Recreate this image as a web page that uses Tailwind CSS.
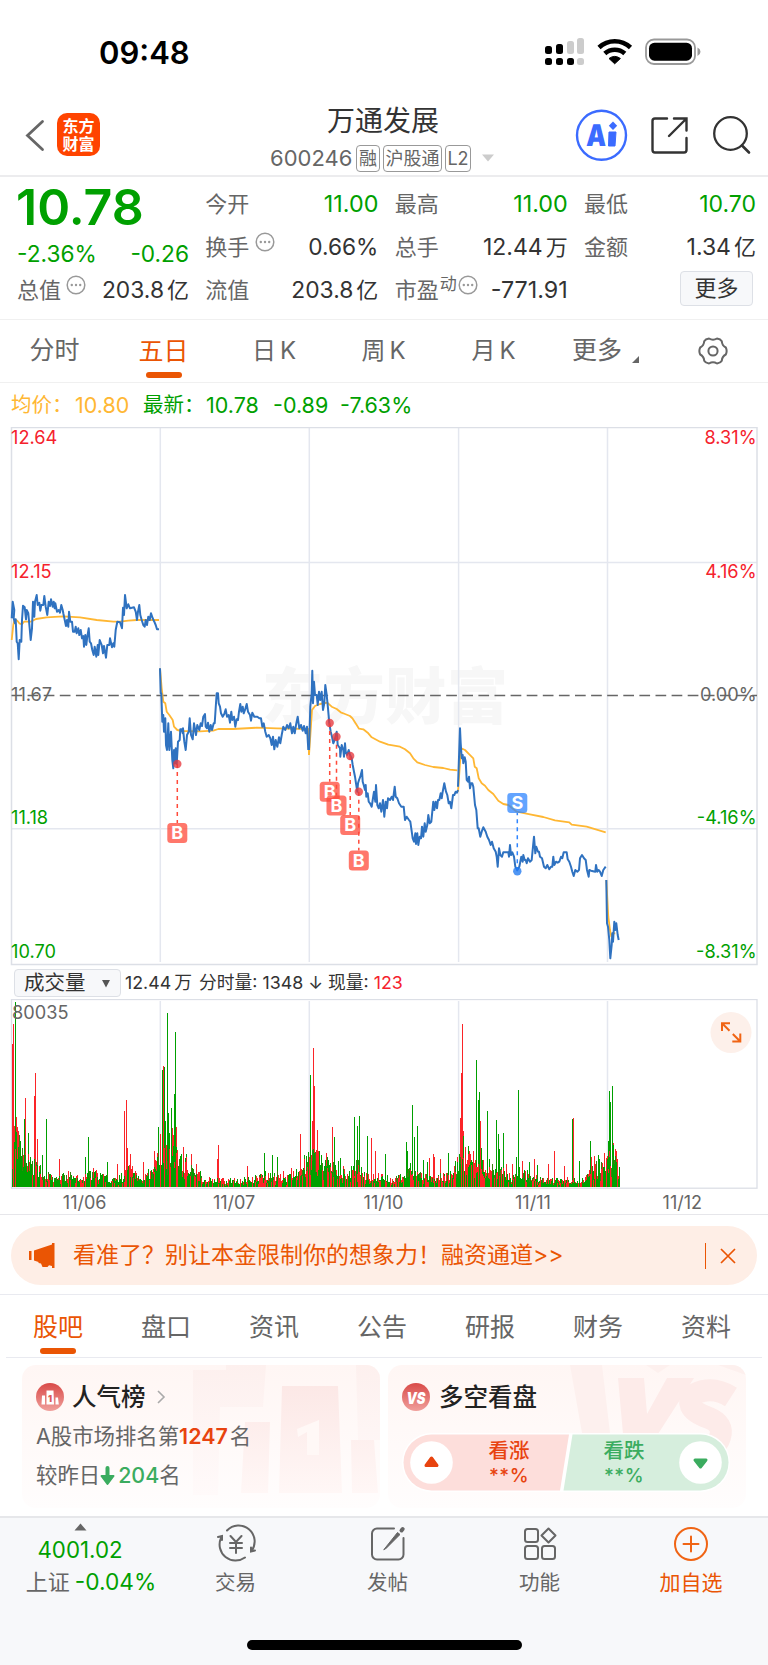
<!DOCTYPE html>
<html lang="zh-CN">
<head>
    <meta charset="UTF-8">
    <meta name="viewport" content="width=device-width, initial-scale=1.0">
    <title>万通发展 600246</title>
    <script src="https://cdn.jsdelivr.net/npm/@tailwindcss/browser@4"></script>
</head>
<body class="bg-white">
<div class="w-[768px] h-[1665px] flex flex-col overflow-hidden bg-white font-['Inter','Noto_Sans_CJK_SC',sans-serif] text-[#333] whitespace-nowrap">

    <!-- Status bar -->
    <div class="h-[104px] shrink-0 flex justify-between pl-[99px] pr-[67px]">
        <span class="mt-[33px] h-[40px] leading-[40px] text-[31px] font-semibold text-black">09:48</span>
        <svg class="mt-[36px]" width="157" height="32" viewBox="544 36 157 32">
            <g fill="#000">
                <rect x="545" y="46" width="7" height="8" rx="2.5"/>
                <rect x="556" y="44" width="7" height="10" rx="2.5"/>
                <rect x="545" y="58" width="7" height="7" rx="2.5"/>
                <rect x="556" y="58" width="7" height="7" rx="2.5"/>
                <rect x="567" y="58" width="7" height="7" rx="2.5"/>
            </g>
            <g fill="#ccc">
                <rect x="567" y="41" width="7" height="13" rx="2.5"/>
                <rect x="577" y="38" width="7" height="16" rx="2.5"/>
                <rect x="577" y="58" width="7" height="7" rx="2.5"/>
            </g>
            <g fill="none" stroke="#000" stroke-width="4.6">
                <path d="M599 47.5a23 23 0 0 1 31.500 0"/>
                <path d="M604.800 53.500a15 15 0 0 1 20 0"/>
            </g>
            <path d="M609 58.500q5.700-4.200 11.400 0l-5.700 5.300z" fill="#000" stroke="#000" stroke-width="1" stroke-linejoin="round"/>
            <rect x="646" y="39.500" width="49" height="24.500" rx="8" fill="none" stroke="#999" stroke-width="1.800"/>
            <rect x="649" y="42.700" width="43" height="18" rx="5.500" fill="#000"/>
            <path d="M697.500 47.500q3 1.500 3 4.200t-3 4.200z" fill="#999"/>
        </svg>
    </div>

    <!-- Title bar -->
    <div class="h-[71px] shrink-0 flex items-start relative border-b-2 border-[#ececee] box-content">
        <svg class="ml-[24px] mt-[14px]" width="22" height="36" viewBox="0 0 22 36" fill="none" stroke="#666" stroke-width="2.8" stroke-linecap="round"><path d="M18.500 3.500L3.500 17.500L18.500 31.500"/></svg>
        <div class="ml-[11px] mt-[9px] size-[43px] rounded-[10px] bg-[#ff4400] text-white font-bold text-[16px] leading-[18px] flex flex-col items-center justify-center"><span>东方</span><span>财富</span></div>
        <div class="absolute left-[199px] w-[368px] top-px flex flex-col items-center">
            <div class="h-[33px] leading-[33px] text-[28px]">万通发展</div>
        </div>
        <div class="absolute left-[270px] top-[39px] h-[30px] flex items-center text-[22px] text-[#666]">
            <span class="w-[86px]">600246</span>
            <span class="w-[24px] h-[27px] flex items-center justify-center border border-[#999] rounded-[4px] text-[18px]">融</span>
            <span class="ml-[3px] w-[59px] h-[27px] flex items-center justify-center border border-[#999] rounded-[4px] text-[18px]">沪股通</span>
            <span class="ml-[3px] w-[26px] h-[27px] flex items-center justify-center border border-[#999] rounded-[4px] text-[18px]">L2</span>
            <svg class="ml-[10px]" width="14" height="8"><path d="M1 0.500h12L7 7.500z" fill="#ccc"/></svg>
        </div>
        <svg class="ml-auto mr-[15px] mt-[4px]" width="180" height="56" viewBox="573 108 180 56" fill="none">
            <circle cx="601.500" cy="135.300" r="24.500" stroke="#3b6bff" stroke-width="2.400"/>
            <text x="586" y="146" font-family="Inter" font-weight="900" font-size="30" fill="#3b6bff" textLength="20" lengthAdjust="spacingAndGlyphs" transform="skewX(-2) translate(5 0)">A</text>
            <path d="M609 132h7l-1 14h-6.500z" fill="#3b6bff" stroke="#3b6bff" stroke-linejoin="round"/>
            <path d="M613 121.500l4.200 4.300l-4.200 4.300l-4.200-4.300z" fill="#3b6bff"/>
            <path d="M667 118.500h-12a2.500 2.500 0 0 0-2.500 2.500v29a2.500 2.500 0 0 0 2.500 2.500h29a2.500 2.500 0 0 0 2.500-2.500v-12M674 118.500h12.500v12M669 136L686 119" stroke="#333" stroke-width="2.400" stroke-linecap="round"/>
            <circle cx="730.500" cy="133.500" r="16.300" stroke="#333" stroke-width="2.300"/>
            <path d="M742 145.500l7 7" stroke="#333" stroke-width="2.600" stroke-linecap="round"/>
        </svg>
    </div>

    <!-- Quote -->
    <div class="h-[143px] shrink-0 border-b border-[#f0f0f0] pl-[17px] pr-[12px] flex justify-between text-[22px]">
        <div class="w-[172px] flex flex-col">
            <div class="h-[56px] leading-[61px] text-[50px] font-semibold text-[#00a000] -ml-[1px]">10.78</div>
            <div class="h-[36px] leading-[42px] flex justify-between text-[22.7px] text-[#00a000]"><span>-2.36%</span><span>-0.26</span></div>
            <div class="h-[43px] flex items-center justify-between"><span class="text-[#666] flex">总值<svg class="ml-[5px] mt-[1px]" width="20" height="20"><use href="#more"/></svg></span><span class="text-[22.8px]">203.8<span class="ml-[3px] text-[22px]">亿</span></span></div>
        </div>
        <div class="w-[173px] pt-[6px]">
            <div class="h-[43px] flex items-center justify-between"><span class="text-[#666]">今开</span><span class="text-[23.3px] text-[#00a000]">11.00</span></div>
            <div class="h-[43px] flex items-center justify-between"><span class="text-[#666] flex">换手<svg class="ml-[6px] mt-[1px]" width="20" height="20"><use href="#more"/></svg></span><span class="text-[22.7px]">0.66%</span></div>
            <div class="h-[43px] flex items-center justify-between"><span class="text-[#666]">流值</span><span class="text-[22.8px]">203.8<span class="ml-[3px] text-[22px]">亿</span></span></div>
        </div>
        <div class="w-[173px] pt-[6px]">
            <div class="h-[43px] flex items-center justify-between"><span class="text-[#666]">最高</span><span class="text-[23.3px] text-[#00a000]">11.00</span></div>
            <div class="h-[43px] flex items-center justify-between"><span class="text-[#666]">总手</span><span class="text-[23px]">12.44<span class="ml-[3px] text-[22px]">万</span></span></div>
            <div class="h-[43px] flex items-center justify-between"><span class="text-[#666] flex">市盈<span class="text-[17px] leading-[20px] ml-px">动</span><svg class="ml-px mt-[1px]" width="20" height="20"><use href="#more"/></svg></span><span class="text-[23.3px]">-771.91</span></div>
        </div>
        <div class="w-[172px] pt-[6px]">
            <div class="h-[43px] flex items-center justify-between"><span class="text-[#666]">最低</span><span class="text-[23px] text-[#00a000]">10.70</span></div>
            <div class="h-[43px] flex items-center justify-between"><span class="text-[#666]">金额</span><span class="text-[23px]">1.34<span class="ml-[3px] text-[22px]">亿</span></span></div>
            <div class="h-[43px] flex items-center justify-end pr-[3px]"><span class="mb-[4px] w-[73px] h-[35px] flex items-center justify-center rounded-[4px] border border-[#dde0e6] bg-[#f7f8fa]">更多</span></div>
        </div>
    </div>

    <!-- Period tabs -->
    <div class="h-[63px] shrink-0 border-b border-[#f0f0f0] flex items-center text-[25px] text-[#666]">
        <div class="w-[109px] text-center">分时</div>
        <div class="w-[109px] h-full flex flex-col items-center text-[#ea5504]"><span class="h-[52px] leading-[62px]">五日</span><i class="w-[36px] h-[6px] rounded-[3px] bg-[#ea5504]"></i></div>
        <div class="w-[112px] text-center text-[24px]">日<span class="ml-[4px]">K</span></div>
        <div class="w-[107px] text-center text-[24px]">周<span class="ml-[4px]">K</span></div>
        <div class="w-[113px] text-center text-[24px]">月<span class="ml-[4px]">K</span></div>
        <div class="pl-[22px] flex items-end">更多<svg class="ml-[9px] mb-[6px]" width="9" height="9"><path d="M8 1v7H1z" fill="#666"/></svg></div>
        <svg class="ml-[58px]" width="30" height="30" viewBox="-15 -15 30 30" fill="none" stroke="#666" stroke-width="2" stroke-linejoin="round">
            <path d="M-4 -12.500Q0 -10 4 -12.500Q7.500 -12 8.800 -9.700Q9 -5.500 12.800 -3.500Q14.500 0 12.800 3.500Q9 5.500 8.800 9.700Q7.500 12 4 12.500Q0 10 -4 12.500Q-7.500 12 -8.800 9.700Q-9 5.500 -12.800 3.500Q-14.500 0 -12.800 -3.500Q-9 -5.500 -8.800 -9.700Q-7.500 -12 -4 -12.500Z"/>
            <circle r="4.600"/>
        </svg>
    </div>

    <!-- Legend -->
    <div class="h-[44px] shrink-0 pl-[11px] flex items-center text-[21.5px] text-[#00a000]">
        <span class="w-[64px] text-[#ffb733] text-[20.500px]">均价：</span><span class="w-[68px] text-[#ffb733]">10.80</span>
        <span class="w-[63px] text-[20.500px]">最新：</span><span class="w-[67px]">10.78</span><span class="w-[67px]">-0.89</span><span>-7.63%</span>
    </div>

    <!-- Price chart -->
    <svg class="shrink-0 block" width="768" height="540" viewBox="0 427 768 540">
        <defs>
            <symbol id="more" viewBox="0 0 20 20"><circle cx="10" cy="10" r="8.800" fill="none" stroke="#999" stroke-width="1.500"/><g fill="#999"><circle cx="5.800" cy="10" r="1.200"/><circle cx="10" cy="10" r="1.200"/><circle cx="14.200" cy="10" r="1.200"/></g></symbol>
        </defs>
        <text x="262" y="719" font-size="61" font-weight="900" fill="#f7f7f7" textLength="246">东方财富</text>
        <g fill="none" stroke="#e4e7ef" stroke-width="1.500">
            <path d="M11 562.500H757M11 828.700H757M160.300 428V962M309.300 428V962M458.600 428V962M607.500 428V962"/>
            <rect x="11.500" y="427.500" width="745.500" height="537" stroke="#dcdfe6"/>
        </g>
        <path d="M11.500 695.500H757" stroke="#666" stroke-width="1.300" stroke-dasharray="10.700 5.400"/>
        <g id="avg" fill="none" stroke="#ffb733" stroke-width="1.800" stroke-linejoin="round"></g>
        <g id="price" fill="none" stroke="#2f72c0" stroke-width="2" stroke-linejoin="round"></g>
        <g font-size="18.200">
            <g fill="#f5222d"><text x="11" y="444">12.64</text><text x="11" y="578">12.15</text><text x="756.500" y="444" text-anchor="end">8.31%</text><text x="756.500" y="578" text-anchor="end">4.16%</text></g>
            <g fill="#666"><text x="11" y="701">11.67</text><text x="756.500" y="701" text-anchor="end">0.00%</text></g>
            <g fill="#00a000"><text x="11" y="823.500">11.18</text><text x="11" y="957.500">10.70</text><text x="756.500" y="823.500" text-anchor="end">-4.16%</text><text x="756.500" y="957.500" text-anchor="end">-8.31%</text></g>
        </g>
        <g id="marks"></g>
    </svg>

    <!-- Volume header -->
    <div class="h-[32px] shrink-0 pl-[14px] flex items-center text-[17.800px]">
        <div class="w-[107px] h-[28px] flex items-center justify-between pl-[9px] pr-[9px] rounded-[4px] border border-[#dde0e6] bg-[#f7f8fa] text-[20.500px]">成交量<svg width="10" height="9"><path d="M1 1h8L5 8.500z" fill="#555"/></svg></div>
        <span class="ml-[4px]">12.44<span class="ml-[3px]">万</span></span>
        <span class="ml-[7px]">分时量: 1348 ↓ 现量: <span class="text-[#f5222d]">123</span></span>
    </div>

    <!-- Volume chart -->
    <svg class="shrink-0 block" width="768" height="190" viewBox="0 999 768 190">
        <path d="M160.300 1001V1188M309.300 1001V1188M458.600 1001V1188M607.500 1001V1188" stroke="#e4e7ef" stroke-width="1.500"/>
        <rect x="11.500" y="999.500" width="745.500" height="188.700" fill="none" stroke="#dcdfe6" stroke-width="1.300"/>
        <g id="vol" shape-rendering="crispEdges"></g>
        <text x="12" y="1019" font-size="18.200" fill="#666">80035</text>
        <circle cx="731" cy="1032.500" r="20.500" fill="#fdf0ea"/>
        <path d="M722 1031v-7.700h8M722.500 1023.800l7 7M740.300 1033.500v8h-8M739.800 1041l-7-7" fill="none" stroke="#f06414" stroke-width="2"/>
    </svg>
    <div class="h-[26px] shrink-0 pl-[10px] pr-[11px] border-b border-[#e6e6ea] grid grid-cols-5 text-center text-[18px] leading-[27px] text-[#666]">
        <span>11/06</span><span>11/07</span><span>11/10</span><span>11/11</span><span>11/12</span>
    </div>

    <!-- Notice -->
    <div class="h-[80px] shrink-0 border-b border-[#e9eaf0] px-[11px] pt-[11px]">
        <div class="h-[59px] rounded-full bg-[#feeee6] flex items-center text-[23px] text-[#ea5504]">
            <svg class="ml-[17px]" width="28" height="26" viewBox="0 0 28 26" fill="#ea5504"><path d="M1 8h2.500v9H1zM6 7.500l18-6V0h2.500v25H24v-2l-3-.8-1.500 1.800h-5l-1.500-3.500-2.500-.5V19L6 17.500z"/></svg>
            <span class="ml-[17px]">看准了？别让本金限制你的想象力！融资通道&gt;&gt;</span>
            <i class="ml-auto w-[1.500px] h-[26px] bg-[#ea5504]"></i>
            <svg class="ml-[13px] mr-[20px]" width="18" height="18" stroke="#ea5504" stroke-width="1.700"><path d="M2 2l14 14M16 2L2 16"/></svg>
        </div>
    </div>

    <!-- Section tabs -->
    <div class="h-[63px] shrink-0 mx-[6px] border-b border-[#e9eaf0]">
        <div class="-ml-[2px] mr-[2px] grid grid-cols-7 text-center text-[25px] leading-[64px] text-[#666]">
            <div class="flex flex-col items-center text-[#ea5504]"><span class="h-[53px]">股吧</span><i class="w-[36px] h-[6px] rounded-[3px] bg-[#ea5504]"></i></div>
            <span>盘口</span><span>资讯</span><span>公告</span><span>研报</span><span>财务</span><span>资料</span>
        </div>
    </div>

    <!-- Cards -->
    <div class="h-[158px] shrink-0 px-[22px] pt-[7px] flex gap-[8px]">
        <div class="relative w-[358px] h-[143px] rounded-[14px] overflow-hidden bg-gradient-to-b from-[#fff6f4] to-[#fffdfd] text-[21.400px] text-[#666]">
            <svg class="absolute left-0 top-0" width="358" height="143" viewBox="0 0 358 143">
                <defs>
                    <linearGradient id="pod" x2="0" y2="1"><stop stop-color="#fce8e6"/><stop offset="1" stop-color="#fff7f6"/></linearGradient>
                    <linearGradient id="haze" x2="0" y2="1"><stop stop-color="#fdf0ee"/><stop offset="1" stop-color="#fffafa"/></linearGradient>
                </defs>
                <path d="M171 5h33V0h40l-3 42h-43l-2 88h-25zM334 0h24v75h-22z" fill="url(#haze)"/>
                <path d="M223 57h25l-2 71h-27zM260 21h56l4 107h-63zM329 75h23l4 53h-26z" fill="url(#pod)"/>
                <path d="M275 64l22-9v35h-12v-23l-9 5z" fill="#fff8f6"/>
            </svg>
            <div class="relative pl-[14px]">
                <div class="h-[53px] pt-[11px] flex items-center text-[24.500px] font-medium text-[#222]">
                    <svg class="mr-[8px]" width="28" height="28" viewBox="0 0 28 28"><defs><linearGradient id="red" x2="0" y2="1"><stop stop-color="#d94a48"/><stop offset="1" stop-color="#f0a09c"/></linearGradient></defs><circle cx="14" cy="14" r="14" fill="url(#red)"/><path d="M6 12.500h3v9H5.500zM10.500 7.500h7l.5 14h-7.500zM19.500 14.500h2.500l.8 7h-3.300z" fill="#fff"/><text x="12" y="18.500" font-size="9" font-weight="900" fill="#dc5a57">1</text></svg>
                    人气榜
                    <svg class="ml-[10px]" width="10" height="16" fill="none" stroke="#aaa" stroke-width="1.600"><path d="M2 2l6 6-6 6"/></svg>
                </div>
                <div class="h-[38px] leading-[37px]">A股市场排名第<span class="font-semibold text-[#e8430f]">1247</span><span class="ml-[2px]">名</span></div>
                <div class="h-[39px] flex items-center">较昨日<svg width="15" height="20" viewBox="0 0 15 20"><path d="M7.500 2v12" stroke="#3bac5f" stroke-width="4" stroke-linecap="round"/><path d="M1.500 10h12l-6 8z" fill="#3bac5f" stroke="#3bac5f" stroke-width="2" stroke-linejoin="round"/></svg><span class="ml-[3px] text-[#3bac5f] font-medium">204</span>名</div>
            </div>
        </div>
        <div class="relative w-[358px] h-[143px] rounded-[14px] overflow-hidden bg-gradient-to-b from-[#fff6f4] to-[#fffdfd]">
            <svg class="absolute left-0 top-0" width="358" height="143" viewBox="0 0 358 143">
                <path d="M182 0h32l8 68h-28zM258 0h24l-12 8zM330 0h28v10z" fill="#fdf0ee"/>
                <path d="M230 13h26l3 36 20-36h27l-36 56h-35z" fill="#fdebe9"/>
                <path d="M343 32q-14-9-28-6q-16 4-12 15q3 7 18 12q15 6 11 19q-4 14-28 18" fill="none" stroke="#fdebe9" stroke-width="22"/>
            </svg>
            <div class="relative px-[14px]">
                <div class="h-[53px] pt-[11px] flex items-center text-[24.500px] font-medium text-[#222]">
                    <svg class="mr-[9px]" width="28" height="28" viewBox="0 0 28 28"><circle cx="14" cy="14" r="14" fill="url(#red)"/><text x="4.500" y="20.500" font-size="16.500" font-weight="900" font-style="italic" fill="#fff" textLength="19" lengthAdjust="spacingAndGlyphs">VS</text></svg>
                    多空看盘
                </div>
                <div class="mt-[15px] w-[328px] h-[59px] relative text-[20.500px] text-center">
                    <svg class="absolute left-0 top-0" width="328" height="59" viewBox="0 0 328 59">
                        <rect width="328" height="59" rx="29.500" fill="#fff"/>
                        <path d="M29.500 1.500H167L158 57.500H29.500a28 28 0 0 1 0-56z" fill="#fddedb"/>
                        <path d="M170.500 1.500H298.500a28 28 0 0 1 0 56H161.500z" fill="#d6eedd"/>
                        <circle cx="29.500" cy="29.500" r="21.300" fill="#fff"/><circle cx="298.500" cy="29.500" r="21.300" fill="#fff"/>
                        <path d="M29.500 25l5.500 7.500h-11z" fill="#e8430f" stroke="#e8430f" stroke-width="3" stroke-linejoin="round"/>
                        <path d="M298.500 34l5.500-7h-11z" fill="#3bac5f" stroke="#3bac5f" stroke-width="3" stroke-linejoin="round"/>
                    </svg>
                    <div class="relative flex pt-[5px] leading-[26px] font-medium">
                        <div class="ml-[77px] w-[60px] text-[#e8430f]">看涨<div class="leading-[24px] text-[19px] tracking-[0.500px]">**%</div></div>
                        <div class="ml-[55px] w-[60px] text-[#3bac5f]">看跌<div class="leading-[24px] text-[19px] tracking-[0.500px]">**%</div></div>
                    </div>
                </div>
            </div>
        </div>
    </div>

    <!-- Bottom bar -->
    <div class="flex-1 bg-[#f7f8fa] border-t-2 border-[#e6e7ea] flex flex-col">
        <div class="h-[84px] flex text-[20.500px] text-[#666] text-center">
            <div class="w-[160px] flex flex-col items-center pt-[5px]">
                <svg width="13" height="8"><path d="M6.500 0.500l6 7h-12z" fill="#666"/></svg>
                <span class="h-[36px] leading-[38px] text-[22.300px] text-[#00a000]">4001.02</span>
                <span class="h-[30px] leading-[30px] pl-[22px] text-[22px]">上证<span class="ml-[5px] text-[22.700px] text-[#00a000]">-0.04%</span></span>
            </div>
            <div class="w-[151px] flex flex-col items-center pt-[6px]">
                <svg width="42" height="40" viewBox="-21 -20 42 40" fill="none" stroke="#666" stroke-width="2" stroke-linecap="round"><path d="M-9 -13.500A16 16 0 0 1 15.500 7M-18 -7l4-1v4M-15 -6A16 16 0 0 0 9 13.500M19 6.500l-4 1v-4M-5.500 -8L0 -2L5.500 -8M0 -2V9M-6 -1H6M-6 4H6"/></svg>
                <span class="mt-[6px] leading-[26px]">交易</span>
            </div>
            <div class="w-[153px] flex flex-col items-center pt-[6px]">
                <svg width="40" height="40" viewBox="-20 -20 40 40" fill="none" stroke="#666" stroke-width="2" stroke-linecap="round"><path d="M6 -15.500H-11a5 5 0 0 0-5 5V10.500a5 5 0 0 0 5 5H10.500a5 5 0 0 0 5-5V-6"/><path d="M-4 5.500L9.500 -11.500L12 -9.500L-1.500 4z" fill="#666" stroke-width="1" stroke-linejoin="round"/><path d="M13.500 -13.500l1.200-1.500" stroke-width="4"/></svg>
                <span class="mt-[6px] leading-[26px]">发帖</span>
            </div>
            <div class="w-[151px] flex flex-col items-center pt-[6px]">
                <svg width="40" height="40" viewBox="-20 -20 40 40" fill="none" stroke="#666" stroke-width="2" stroke-linejoin="round"><rect x="-15" y="-15" width="13" height="13" rx="2.500"/><rect x="-15" y="2" width="13" height="13" rx="2.500"/><rect x="2" y="2" width="13" height="13" rx="2.500"/><path d="M8.500 -15.500l7 7-7 7-7-7z"/></svg>
                <span class="mt-[6px] leading-[26px]">功能</span>
            </div>
            <div class="w-[152px] flex flex-col items-center pt-[6px] text-[#ea5504]">
                <svg width="40" height="40" viewBox="-20 -20 40 40" fill="none" stroke="#f06414" stroke-width="2" stroke-linecap="round"><circle r="16"/><path d="M-7.500 0H7.500M0 -7.500V7.500"/></svg>
                <span class="mt-[6px] leading-[26px] text-[21px]">加自选</span>
            </div>
        </div>
        <div class="mt-[38px] mx-auto w-[275px] h-[10px] rounded-full bg-black"></div>
    </div>
</div>

<script>
    // Each session is a list of x,y pairs, three units to the pixel
    const price = [
        "35,175 38,125 43,150 41,175 45,190 47,178 50,245 53,250 56,298 59,240 64,245 66,180 69,137 74,142 78,178 80,150 85,160 89,205 92,240 96,205 97,180 99,125 103,170 105,125 110,105 113,135 118,128 121,152 124,135 130,135 133,108 137,140 142,165 146,125 150,138 153,118 158,140 161,125 164,145 166,130 171,155 176,150 180,158 184,135 188,150 190,160 198,198 201,180 205,200 207,155 211,185 216,185 219,215 224,215 227,200 230,220 235,205 238,225 242,210 246,235 250,228 252,260 256,225 259,255 262,230 266,205 269,245 273,250 277,270 281,285 284,260 289,290 293,255 295,285 299,240 305,255 309,280 312,258 318,293 322,255 328,255 330,235 336,262 340,250 343,260 347,210 352,185 360,187 366,205 369,143 372,165 375,105 380,145 385,133 390,145 402,142 407,155 411,180 414,155 418,135 421,165 425,180 430,195 434,200 437,180 441,195 445,170 449,180 453,160 458,175 463,185 467,195 471,208 477,208",
        "480,325 482,400 484,400 487,485 490,465 492,515 496,475 498,555 501,570 505,490 508,570 513,515 517,600 520,625 522,570 525,610 527,565 530,612 534,545 539,540 541,508 545,508 548,520 549,505 553,545 557,570 561,525 566,515 569,475 573,525 578,538 582,490 588,525 592,495 598,510 602,490 606,498 610,470 615,462 617,500 621,505 624,488 628,515 632,495 636,510 641,490 644,490 648,430 650,400 654,400 656,430 660,440 663,460 668,470 673,462 677,448 681,470 686,465 690,488 694,455 697,480 702,470 706,500 710,478 714,480 717,455 721,432 724,455 728,440 731,460 735,450 740,432 744,455 750,465 753,482 757,458 763,470 772,470 778,475 783,475 787,500 791,490 796,515 800,530 806,525 811,535 815,555 819,530 823,568 827,540 832,560 837,532 841,550 845,525 850,500 856,510 861,495 866,505 871,490 876,520 880,500 884,520 888,495 893,470 898,505 903,495 908,512 912,498 917,520 921,500 925,570",
        "927,570 931,440 935,400 937,332 939,430 942,365 945,405 950,405 953,435 957,395 961,420 965,395 969,450 973,430 976,375 980,405 984,445 988,490 992,515 996,530 1000,550 1004,540 1010,515 1013,555 1020,565 1021,590 1025,555 1030,570 1032,590 1035,550 1037,575 1041,585 1046,570 1050,585 1055,595 1058,615 1062,635 1065,650 1068,670 1072,695 1074,670 1077,660 1081,650 1086,630 1088,665 1091,675 1095,690 1097,675 1099,710 1103,700 1106,725 1110,730 1115,740 1118,720 1122,695 1126,725 1128,675 1132,735 1136,745 1140,730 1144,755 1149,720 1153,770 1157,725 1161,745 1164,715 1170,720 1175,710 1179,720 1184,680 1187,710 1192,715 1197,730 1204,740 1211,740 1215,780 1220,770 1227,780 1231,785 1236,820 1238,835 1242,845 1246,820 1248,852 1252,820 1255,855 1259,830 1263,835 1266,800 1270,830 1274,790 1277,815 1282,795 1285,765 1289,790 1294,785 1300,725 1303,750 1307,725 1311,745 1314,720 1318,720 1322,700 1325,715 1328,695 1333,670 1338,695 1342,705 1346,730 1350,725 1354,745 1359,705 1363,705 1367,695 1371,698 1374,690",
        "1374,680 1380,505 1382,550 1385,595 1388,585 1390,610 1394,592 1397,605 1400,660 1404,665 1407,650 1410,685 1413,670 1417,670 1420,680 1425,735 1429,750 1433,805 1436,805 1441,830 1445,815 1450,802 1457,815 1462,830 1467,840 1472,855 1476,845 1481,865 1487,875 1490,890 1493,920 1497,865 1501,885 1506,890 1510,877 1525,877 1527,890 1530,855 1533,885 1537,877 1542,890 1546,920 1552,930 1558,920 1564,890 1568,905 1570,885 1574,900 1577,900 1580,910 1584,895 1590,905 1595,900 1599,860 1602,830 1606,880 1609,860 1614,875 1617,875 1620,890 1626,895 1632,920 1637,925 1642,915 1648,928 1653,920 1657,920 1660,890 1663,915 1668,905 1673,908 1678,905 1683,890 1687,895 1691,877 1700,877 1703,898 1708,905 1713,920 1717,935 1721,948 1726,930 1732,935 1737,930 1740,895 1746,885 1752,895 1757,900 1761,930 1766,950 1768,930 1773,932 1786,935 1788,915 1792,935 1796,930 1800,935 1805,948 1810,930 1817,920",
        "1819,960 1821,1090 1824,1100 1828,1140 1831,1195 1835,1155 1837,1120 1839,1145 1843,1085 1846,1110 1849,1090 1853,1125 1856,1140"
    ];
    const avg = [
        "35,240 40,195 44,178 52,182 58,190 66,193 72,185 92,185 108,177 140,172 190,169 240,172 290,180 340,185 360,185 385,182 410,180 477,180",
        "480,325 485,385 490,425 496,430 500,455 508,465 518,480 522,500 532,510 545,513 600,514 640,512 655,507 700,507 770,503 830,505 925,507 927,585",
        "927,585 932,510 936,450 945,438 960,432 982,428 995,440 1010,447 1022,457 1035,462 1050,468 1058,476 1070,495 1077,506 1090,508 1105,520 1115,532 1140,545 1165,554 1200,560 1215,568 1230,580 1240,595 1252,607 1275,615 1300,621 1330,624 1350,629 1372,631",
        "1374,695 1380,610 1384,565 1395,570 1408,583 1420,595 1424,620 1430,625 1436,655 1445,670 1455,677 1465,690 1480,702 1495,722 1510,732 1525,735 1550,755 1590,763 1630,771 1665,781 1708,787 1715,794 1760,800 1817,817",
        "1819,960 1825,1070 1830,1110 1834,1130 1840,1120 1846,1120"
    ];
    const toPixels = s => s.split(' ').map(p => {
        const [x, y] = p.split(',').map(Number);
        return (x / 3).toFixed(1) + ',' + (560 + y / 3).toFixed(1);
    }).join(' ');
    const lines = list => list.map(s => `<polyline points="${toPixels(s)}"/>`).join('');
    document.getElementById('price').innerHTML = lines(price);
    document.getElementById('avg').innerHTML = lines(avg);

    // Buy and sell marks: x, dot y, badge y, letter
    const marks = [
        [177.3, 764, 833, 'B'], [329.7, 723, 791.7, 'B'], [336.5, 736.7, 805.5, 'B'],
        [350.2, 756, 825, 'B'], [358.8, 791.7, 860.5, 'B'], [517.3, 871.3, 803, 'S']
    ];
    document.getElementById('marks').innerHTML = marks.map(([x, dot, badge, letter]) => {
        const color = letter === 'B' ? '#ff4a3a' : '#2f85ff';
        return `<path d="M${x} ${dot}V${badge + (letter === 'B' ? -10 : 10)}" stroke="${color}" stroke-width="1.5" stroke-dasharray="4 4"/>
            <circle cx="${x}" cy="${dot}" r="4.200" fill="${letter === 'B' ? '#e8383d' : '#1f78f0'}" fill-opacity=".78"/>
            <rect x="${x - 10}" y="${badge - 10}" width="20" height="20" rx="3.500" fill="${color}" fill-opacity=".75"/>
            <text x="${x}" y="${badge + 6.3}" font-size="18" font-weight="700" fill="#fff" text-anchor="middle">${letter}</text>`;
    }).join('');

    // Volume: base level along x, then the tall bars
    const level = [[36, 110], [44, 190], [60, 130], [90, 80], [130, 55], [160, 28], [215, 45], [240, 25], [280, 50], [335, 25], [370, 38], [390, 65], [420, 35], [460, 55], [480, 120], [500, 170], [525, 140], [545, 90], [570, 75], [610, 32], [650, 25], [700, 24], [760, 28], [800, 50], [870, 32], [920, 80], [940, 110], [975, 85], [1010, 75], [1045, 42], [1070, 75], [1100, 40], [1140, 40], [1180, 24], [1210, 40], [1225, 75], [1260, 42], [1290, 32], [1350, 40], [1375, 90], [1392, 110], [1440, 85], [1490, 65], [1530, 35], [1560, 55], [1620, 26], [1680, 26], [1750, 26], [1790, 70], [1820, 80], [1835, 130], [1850, 90], [1860, 35]];
    const peaks = [[38, 430, 'r'], [41, 490, 'r'], [45, 556, 'g'], [50, 210, 'r'], [53, 172, 'r'], [72, 205, 'g'], [75, 268, 'r'], [84, 164, 'g'], [104, 275, 'r'], [107, 342, 'r'], [112, 145, 'r'], [126, 97, 'g'], [139, 204, 'g'], [179, 84, 'r'], [256, 90, 'g'], [264, 152, 'g'], [323, 76, 'g'], [351, 70, 'r'], [373, 230, 'r'], [378, 262, 'r'], [382, 118, 'r'], [391, 101, 'r'], [429, 76, 'r'], [462, 108, 'r'], [475, 182, 'g'], [480, 160, 'r'], [486, 352, 'g'], [489, 363, 'r'], [492, 361, 'g'], [496, 200, 'g'], [503, 522, 'g'], [506, 222, 'g'], [513, 238, 'g'], [518, 140, 'g'], [523, 281, 'g'], [526, 465, 'g'], [529, 182, 'r'], [549, 120, 'r'], [559, 99, 'g'], [573, 100, 'r'], [588, 70, 'r'], [652, 85, 'r'], [655, 126, 'r'], [741, 63, 'r'], [794, 104, 'g'], [817, 96, 'g'], [832, 92, 'g'], [850, 50, 'r'], [875, 58, 'r'], [900, 159, 'r'], [912, 97, 'g'], [925, 105, 'g'], [932, 338, 'g'], [937, 198, 'r'], [940, 417, 'r'], [943, 305, 'r'], [951, 173, 'r'], [957, 110, 'g'], [980, 104, 'r'], [996, 182, 'r'], [1003, 150, 'g'], [1021, 89, 'g'], [1062, 212, 'g'], [1071, 185, 'g'], [1079, 213, 'g'], [1103, 155, 'g'], [1114, 149, 'r'], [1125, 108, 'r'], [1155, 100, 'g'], [1220, 137, 'g'], [1223, 108, 'g'], [1236, 246, 'g'], [1243, 150, 'g'], [1251, 185, 'g'], [1271, 83, 'g'], [1281, 75, 'g'], [1288, 87, 'r'], [1301, 100, 'r'], [1304, 90, 'r'], [1322, 85, 'r'], [1345, 102, 'g'], [1380, 208, 'r'], [1383, 342, 'r'], [1386, 491, 'r'], [1389, 168, 'r'], [1391, 155, 'g'], [1397, 120, 'r'], [1404, 124, 'g'], [1411, 101, 'r'], [1428, 383, 'g'], [1436, 262, 'g'], [1439, 286, 'g'], [1441, 198, 'r'], [1444, 117, 'g'], [1451, 83, 'r'], [1463, 228, 'g'], [1469, 84, 'g'], [1488, 202, 'g'], [1496, 161, 'g'], [1499, 115, 'g'], [1509, 162, 'g'], [1519, 70, 'r'], [1537, 70, 'r'], [1550, 92, 'g'], [1554, 293, 'g'], [1566, 80, 'r'], [1589, 76, 'g'], [1602, 86, 'r'], [1611, 66, 'g'], [1645, 71, 'r'], [1663, 108, 'r'], [1694, 65, 'r'], [1716, 204, 'g'], [1719, 207, 'r'], [1737, 80, 'g'], [1770, 138, 'g'], [1774, 92, 'r'], [1784, 94, 'r'], [1795, 98, 'g'], [1813, 102, 'r'], [1825, 138, 'g'], [1828, 290, 'g'], [1832, 256, 'g'], [1836, 303, 'g'], [1840, 134, 'r'], [1848, 97, 'g'], [1857, 62, 'g']];
    const colors = { g: '#00a000', r: '#fb2428', m: '#3b8010' };
    let seed = 7;
    const rand = () => (seed = (seed * 16807) % 2147483647) / 2147483647;
    const levelAt = x => {
        const i = Math.max(1, level.findIndex(p => p[0] >= x));
        const [x0, y0] = level[i - 1], [x1, y1] = level[i];
        return y0 + (y1 - y0) * (x - x0) / (x1 - x0);
    };
    const bar = (x, h, c) => `<rect x="${Math.round(x / 3 - 0.5)}" y="${(1187.4 - h / 3).toFixed(2)}" width="1" height="${(h / 3).toFixed(2)}" fill="${colors[c]}"/>`;
    let bars = peaks.map(p => bar(...p)).join('');
    for (let x = 37; x < 1860; x += 3) {
        const h = levelAt(x) * (0.45 + rand() * 0.75);
        const r = rand();
        bars += bar(x, h, r < 0.42 ? 'g' : r < 0.82 ? 'r' : 'm');
        bars += bar(x, h * (0.4 + rand() * 0.5), rand() < 0.7 ? 'g' : 'r');
    }
    document.getElementById('vol').innerHTML = bars;
</script>
</body>
</html>
